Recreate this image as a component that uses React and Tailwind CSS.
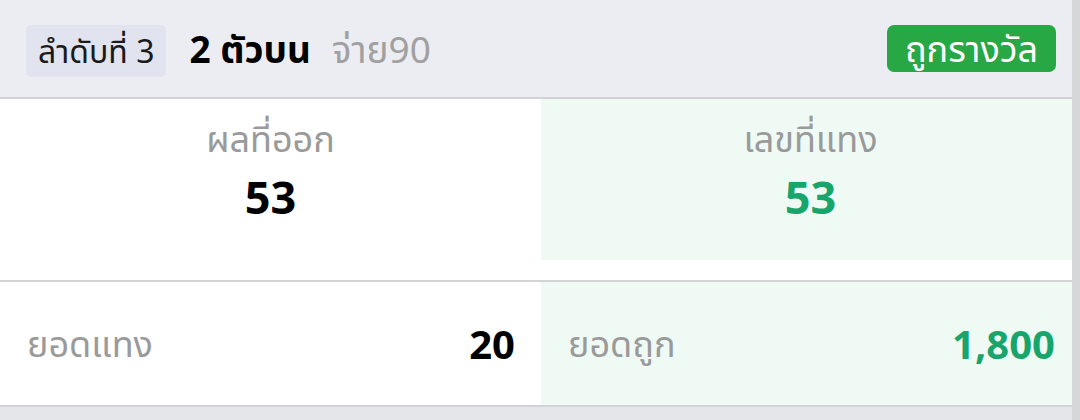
import React from "react";

const font = { fontFamily: '"Noto Sans", "Noto Sans Thai", sans-serif' };

const ResultCard = ({ rank, type, payout, drawn, bet, stake, won }) => {
  return (
    <div className="w-[1080px] bg-white">
      <div className="h-[99px] flex items-center pl-[26px] pr-[24px] bg-[#ecedf2] border-b-2 border-[#d3d3d5]">
        <span className="h-[52px] mt-[4px] px-[12px] flex items-center rounded-[5px] bg-[#e1e3ee] text-[32px] leading-none text-[#1a1a1a]">
          ลำดับที่ {rank}
        </span>
        <span className="ml-[23px] text-[37px] leading-none font-bold text-black">{type}</span>
        <span className="ml-[21px] text-[37px] leading-none text-[#a0a0a0]">จ่าย{payout}</span>
        <span className="ml-auto h-[47px] px-[18px] flex items-center rounded-[7px] bg-[#28a745] text-[36px] leading-none text-white">
          ถูกรางวัล
        </span>
      </div>

      <div className="grid grid-cols-[541px_1fr] h-[183px] border-b-2 border-[#d3d3d5]">
        <div className="flex flex-col items-center pt-[18px]">
          <span className="text-[36px] leading-[44px] text-[#9a9a9a]">ผลที่ออก</span>
          <span className="mt-[6px] text-[45px] leading-[60px] font-bold text-black">{drawn}</span>
        </div>
        <div className="h-[161px] flex flex-col items-center pt-[18px] bg-[#f0faf5]">
          <span className="text-[36px] leading-[44px] text-[#9a9a9a]">เลขที่แทง</span>
          <span className="mt-[6px] text-[45px] leading-[60px] font-bold text-[#17a56b]">{bet}</span>
        </div>
      </div>

      <div className="grid grid-cols-[541px_1fr] h-[125px] border-b-2 border-[#d3d3d5]">
        <div className="flex items-center justify-between pl-[27px] pr-[26px]">
          <span className="text-[36px] text-[#9a9a9a]">ยอดแทง</span>
          <span className="text-[40px] font-bold text-black">{stake}</span>
        </div>
        <div className="flex items-center justify-between pl-[27px] pr-[25px] bg-[#f0faf5]">
          <span className="text-[36px] text-[#9a9a9a]">ยอดถูก</span>
          <span className="text-[40px] font-bold text-[#17a56b]">{won}</span>
        </div>
      </div>
    </div>
  );
};

const App = () => {
  return (
    <div className="relative w-[1080px] h-[420px] overflow-hidden bg-[#e5e6e9]" style={font}>
      <ResultCard rank={3} type="2 ตัวบน" payout={90} drawn="53" bet="53" stake="20" won="1,800" />
      {/* scroll edge */}
      <div className="absolute top-0 right-0 w-[8px] h-full bg-[#d6d7d9]" />
    </div>
  );
};

export default App;
